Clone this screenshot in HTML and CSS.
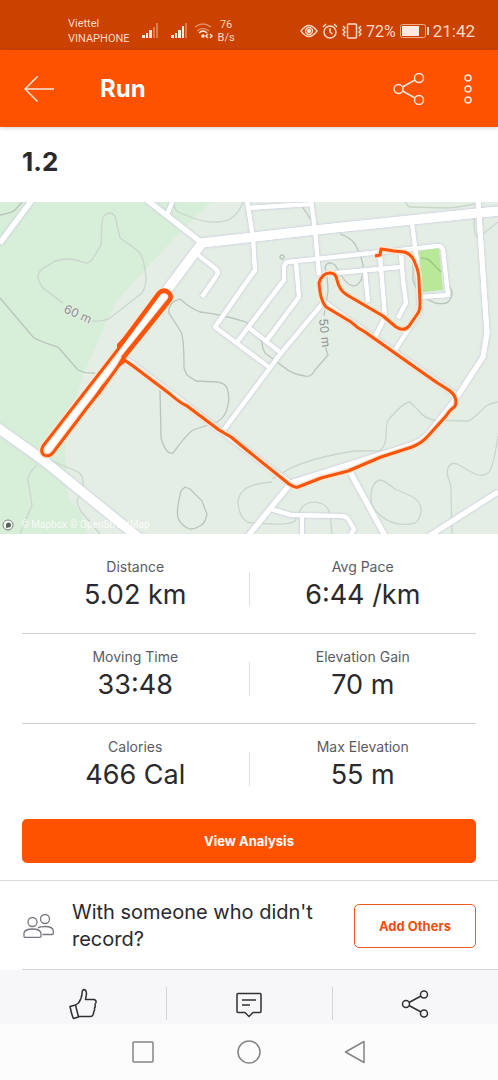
FILE: index.html
```html
<!DOCTYPE html>
<html lang="en">
<head>
    <meta charset="utf-8">
    <meta name="viewport" content="width=device-width, initial-scale=1">
    <title>Run</title>
    <link rel="stylesheet" href="styles.css">
</head>
<body>
    <div class="status-bar">
        <div class="carriers">Viettel<br>VINAPHONE</div>
        <svg class="signal" width="17" height="16" viewBox="0 0 17 16">
            <path d="M0 12h3v3H0zM4 10h2v5H4zM7 7h3v8H7z"/>
            <path class="dim" d="M11 4h2v11h-2zM14 0h2v15h-2z"/>
        </svg>
        <svg class="signal" width="17" height="16" viewBox="0 0 17 16">
            <path d="M0 12h3v3H0zM4 10h2v5H4zM7 7h3v8H7zM11 3h2v12h-2z"/>
            <path class="dim" d="M14 0h2v15h-2z"/>
        </svg>
        <svg class="wifi" width="19" height="16" viewBox="0 0 19 16">
            <path class="dim" d="M1 4Q9 -2 17 4M3 8Q9 3 15 8"/>
            <path d="M5 10Q9 6 13 10"/>
            <circle cx="9" cy="13" r="1"/>
            <path d="M14 11l-2 2 2 2M16 11l2 2-2 2"/>
        </svg>
        <div class="net-speed">76<br>B/s</div>
        <div class="status-right">
            <svg width="18" height="16" viewBox="0 0 18 16" fill="none" stroke="#ffd9c5" stroke-width="1.4">
                <path d="M1 8Q5 2.5 9 2.5T17 8Q13 13.5 9 13.5T1 8z"/>
                <circle cx="9" cy="8" r="3.5"/>
                <circle cx="9" cy="8" r="1.5" fill="#fff"/>
            </svg>
            <svg width="16" height="16" viewBox="0 0 16 16" fill="none" stroke="#ffd9c5" stroke-width="1.5">
                <circle cx="8" cy="9" r="6"/>
                <path d="M8 5v4l2.5 2M1 4l3-3M12 1l3 3"/>
            </svg>
            <svg width="20" height="16" viewBox="0 0 20 16" fill="none" stroke="#ffd9c5" stroke-width="1.5">
                <rect x="5.5" y="1" width="9" height="14" rx="1"/>
                <path d="M1 3l2 2-2 2 2 2-2 2 2 2M19 3l-2 2 2 2-2 2 2 2-2 2"/>
            </svg>
            <span class="percent">72%</span>
            <svg width="29" height="14" viewBox="0 0 29 14">
                <rect x=".5" y=".5" width="25" height="13" rx="2" fill="none" stroke="#f5a985"/>
                <rect x="2" y="2" width="17" height="10" fill="#ffe9df"/>
                <path d="M27 3h2v8h-2z" fill="#ffd9c5"/>
            </svg>
            <span class="clock">21:42</span>
        </div>
    </div>

    <header class="app-bar">
        <button class="icon-button" aria-label="Back">
            <svg width="30" height="26" viewBox="0 0 30 26" fill="none" stroke="#ffe6da" stroke-width="1.5">
                <path d="M30 13H1M13.5 0.5L1 13l12.5 12.5"/>
            </svg>
        </button>
        <h1>Run</h1>
        <button class="icon-button" aria-label="Share">
            <svg width="32" height="32" viewBox="0 0 32 32" fill="none" stroke="#ffe6da" stroke-width="1.5">
                <circle cx="5.5" cy="16" r="4.5"/>
                <circle cx="26" cy="5" r="4.5"/>
                <circle cx="26" cy="27" r="4.5"/>
                <path d="M9.5 14l12.500-7M9.5 18l12.500 7"/>
            </svg>
        </button>
        <button class="icon-button" aria-label="More options">
            <svg width="10" height="32" viewBox="0 0 10 32" fill="none" stroke="#ffe6da" stroke-width="1.5">
                <circle cx="5" cy="5" r="3"/>
                <circle cx="5" cy="16" r="3"/>
                <circle cx="5" cy="27" r="3"/>
            </svg>
        </button>
    </header>

    <main>
        <h2 class="activity-name">1.2</h2>

        <svg class="map" viewBox="0 202 498 332" role="img" aria-label="Route map">
            <defs>
                <g id="roads">
                    <g stroke-width="4">
                        <path d="M173 200L167 215"/>
                        <path d="M198 255L216 269Q219 272 217 275L202 297"/>
                        <path d="M247 200L253 238L255 270L215 327L270 368"/>
                        <path d="M248 208L311 204M311 200L315 230L319 275"/>
                        <path d="M323 303L281 353L223 431"/>
                        <path d="M281 353L248 327M237 342L284 280V268Q284 263 288 262L381 252L438 246Q442 246 443 250L448 295L421 297"/>
                        <path d="M296 263L299 297L267 340"/>
                        <path d="M336 273L401 267M365 271L368 302M380 255L385 317L375 337"/>
                        <path d="M401 253L403 280L406 303L398 318"/>
                        <path d="M412 223L417 262L420 312L395 350"/>
                        <path d="M271 509L291 515L340 516Q346 516 348 519L354 529L350 536M302 516V536"/>
                    </g>
                    <g stroke-width="5">
                        <path d="M32 200L0 243M147 200L202 243"/>
                        <path d="M478 200L487 333L483 357L455 400L430 432Q423 441 411 445L348 465L291 483L248 536"/>
                        <path d="M123 357L290 483M323 302L455 394"/>
                        <path d="M349 470L385 536M429 536L498 492"/>
                    </g>
                    <g stroke-width="9">
                        <path d="M-2 428L43 460L139 538"/>
                        <path d="M500 211L478 213L315 230L202 243L164 294L46 454"/>
                    </g>
                </g>
            </defs>
            <rect y="202" width="498" height="332" fill="#e4eee5"/>
            <path fill="#d7eed8" d="M0 202H211L180 232L147 268L115 303L100 337L83 375L67 430L65 451L68 498L80 511L88 534H0z"/>

            <g class="contours">
                <path d="M92 321Q102 322 110 318L142 293Q146 286 146 278Q145 265 142 257Q140 252 133 247L120 238L115 216Q110 210 104 216Q102 219 102 225L101 245L93 258Q90 263 86 263Q78 260 70 259Q62 259 55 261L42 269Q38 273 38 277Q39 283 43 288L63 303"/>
                <path d="M173 202Q175 210 178 212L193 218Q207 223 217 222Q227 222 233 217Q240 211 243 202"/>
                <path d="M37 465Q28 473 28 480L32 505L20 534M50 460L78 472Q84 476 83 485L77 501Q78 508 84 515L100 534"/>
                <path d="M272 482Q250 484 244 490Q238 495 238 503Q240 522 252 523L272 524Q289 525 295 521Q301 506 306 504Q312 501 320 503Q329 506 330 515L332 534"/>
                <path d="M272 479L291 468Q315 457 355 451L380 451Q386 445 386 435Q386 420 390 418Q404 402 410 402L418 410Q425 419 434 420L468 421Q472 420 485 407Q490 403 498 402"/>
                <path d="M381 480Q385 481 395 489L411 496Q421 501 421 509Q421 519 415 523Q408 525 398 524Q385 521 378 513Q371 508 371 498Q371 481 381 480z"/>
                <path d="M498 436Q493 470 488 473Q483 477 475 474L459 465Q453 461 449 466Q446 471 448 477Q452 486 451 495L452 534"/>
                <path d="M406 202Q407 207 411 207L448 208Q467 206 478 203M475 213Q472 234 478 238L498 222"/>
            </g>
            <g class="contours dark">
                <path d="M0 215Q12 213 15 210L22 202M0 298L33 337Q38 341 58 347L78 370Q86 374 95 373"/>
                <path d="M265 353Q262 348 262 342L246 322Q220 314 200 312Q190 308 180 299L173 302Q168 307 169 313L181 332Q184 338 184 368L187 375L196 381L217 382Q225 383 227 388Q230 397 228 405Q226 417 217 422L193 430Q187 434 173 453Q166 455 161 438L160 388"/>
                <path d="M185 487L190 489L202 501L207 514Q205 524 200 526Q195 529 190 529Q181 526 178 518Q176 510 181 491z"/>
                <path d="M340 234Q350 237 355 244Q361 255 363 265Q363 276 361 280Q358 286 353 286Q347 284 343 278L335 265Q328 260 325 267Q328 280 328 291L324 316M325 346L328 355L315 370Q311 378 305 376Q292 374 285 368L265 353"/>
                <path d="M300 203L311 220M413 263V280Q418 296 435 303Q446 305 449 301Q453 296 452 291L445 280"/>
                <circle cx="282" cy="257" r="2"/>
            </g>

            <use href="#roads" class="road-casing"/>
            <use href="#roads" class="road"/>
            <path d="M419 251L439 248L443 290L423 292z" fill="#b9e998"/>
            <path d="M421 258Q429 258 433 264L441 272" fill="none" stroke="#9ac985" stroke-width="1.5"/>

            <g class="map-label">
                <text transform="translate(63 312) rotate(24)">60 m</text>
                <text transform="translate(319 319) rotate(84)">50 m</text>
            </g>

            <g class="route-halo">
                <path id="route" d="M375 256L380 255L381 249Q388 250 394 251L404 252Q412 254 415 263Q419 272 419 280L420 303Q420 310 418 313L409 326Q404 332 396 327L383 316L347 295Q339 290 337 280Q336 273 330 273Q322 273 319 283Q320 300 326 307L351 322Q357 328 365 332L416 368L436 382L450 391Q456 396 456 402Q456 406 453 408Q450 410 446 416L428 436Q422 443 412 447L381 457L348 471L321 478L298 487Q295 488 289 484L248 451L231 437L219 430L187 406Q180 403 170 394L133 366L123 359"/>
                <path id="loop" d="M159 293L121 343L119 348L102 370L43 446Q40 452 44 455Q50 458 55 450L80 417L86 409L101 390L117 368L123 358L168 302Q173 297 169 293Q164 288 159 293z"/>
            </g>
            <use href="#route" class="route"/>
            <use href="#loop" class="route"/>
            <!-- the trace is thicker on the upper half and where it doubles back -->
            <path class="route overlap" d="M119 347L159 293Q164 288 169 293Q173 297 168 302L123 358"/>
            <path d="M117 351V344L122 339L127 338zM89 404L101 393L103 384L108 376zM118 368L127 361L123 355z" fill="#fb540d"/>

            <circle cx="8" cy="525" r="5" fill="#fff" stroke="#76827a"/>
            <path d="M6 528V525a2.5 2.5 0 1 1 2.5 2.5z" fill="#59645d"/>
            <text class="map-credit" x="21" y="528">© Mapbox © OpenStreetMap</text>
        </svg>

        <dl class="stats">
            <div class="stats-row">
                <div class="stat"><dt>Distance</dt><dd>5.02 km</dd></div>
                <div class="stat"><dt>Avg Pace</dt><dd>6:44 /km</dd></div>
            </div>
            <div class="stats-row">
                <div class="stat"><dt>Moving Time</dt><dd>33:48</dd></div>
                <div class="stat"><dt>Elevation Gain</dt><dd>70 m</dd></div>
            </div>
            <div class="stats-row">
                <div class="stat"><dt>Calories</dt><dd>466 Cal</dd></div>
                <div class="stat"><dt>Max Elevation</dt><dd>55 m</dd></div>
            </div>
        </dl>
        <div class="analysis">
            <button class="button primary">View Analysis</button>
        </div>

        <section class="others">
            <svg width="32" height="26" viewBox="0 0 32 26" fill="none" stroke="#77777f" stroke-width="1.3">
                <circle cx="10.5" cy="9" r="4.5"/>
                <circle cx="23" cy="6" r="4.500"/>
                <path d="M2 23.500V20Q3 16 10.500 16T19 20v3.500q0 .8-1 .8H3q-1 0-1-.8z"/>
                <path d="M16 15Q18 13.500 23 13.500Q31 13.500 31.300 18V20.500q0 1-1 1H20.500"/>
            </svg>
            <p>With someone who didn't record?</p>
            <button class="button outline">Add Others</button>
        </section>
    </main>

    <div class="actions">
        <button aria-label="Give kudos">
            <svg width="30" height="32" viewBox="0 0 30 32" fill="none" stroke="#303034" stroke-width="1.5" stroke-linejoin="round">
                <path d="M2 18.5l5.5-1.5 3 12-5 1.5Q4 28 2 18.5z"/>
                <path d="M7.5 17l3-2Q14 10 14 5.5Q14 2 16 1.5Q18.5 2 18.5 6L17.5 11.5H26q2.5.5 2 3l-1 2q.8 2-.5 3.5.5 2-.5 3l-1 4q-.5 1.5-3 1.5H10.5"/>
            </svg>
        </button>
        <button aria-label="Comments">
            <svg width="26" height="28" viewBox="0 0 26 28" fill="none" stroke="#303034" stroke-width="1.5" stroke-linejoin="round">
                <path d="M2 3.5h22q1 0 1 1v17q0 1-1 1h-7l-4 4-4-4H2q-1 0-1-1v-17q0-1 1-1z"/>
                <path d="M6 10h14M6 15h8"/>
            </svg>
        </button>
        <button aria-label="Share activity">
            <svg width="28" height="28" viewBox="0 0 28 28" fill="none" stroke="#303034" stroke-width="1.5">
                <circle cx="5" cy="14" r="3.5"/>
                <circle cx="23" cy="4.500" r="3.5"/>
                <circle cx="23" cy="23.500" r="3.5"/>
                <path d="M8 12.5l12-6.5M8 15.5l12 6.5"/>
            </svg>
        </button>
    </div>

    <nav class="system-nav">
        <button aria-label="Recent apps">
            <svg width="24" height="24" viewBox="0 0 24 24"><rect x="2" y="2" width="20" height="20" rx="1"/></svg>
        </button>
        <button aria-label="Home">
            <svg width="24" height="24" viewBox="0 0 24 24"><circle cx="12" cy="12" r="11"/></svg>
        </button>
        <button aria-label="Back">
            <svg width="24" height="24" viewBox="0 0 24 24"><path d="M21 1.5v21L2.5 12z"/></svg>
        </button>
    </nav>
</body>
</html>
```
FILE: styles.css
```css
* {
    box-sizing: border-box;
}

body {
    display: flex;
    flex-direction: column;
    min-height: 100vh;
    margin: 0;
    background: #fff;
    color: #29292e;
    font-family: Inter, "Liberation Sans", sans-serif;
}

h1, h2, p, dl, dd {
    margin: 0;
}

button {
    font-family: inherit;
    cursor: pointer;
}

svg {
    display: block;
    flex: none;
}

/* Phone status bar */
.status-bar {
    display: flex;
    align-items: center;
    height: 50px;
    padding: 12px 23px 0 68px;
    background: #cb4100;
    color: #ffd9c5;
    font-family: Roboto, sans-serif;
    font-size: 11px;
    line-height: 15px;
}

.signal {
    margin-left: 12px;
    fill: #ffe9df;
}

.signal .dim {
    opacity: .35;
}

.wifi {
    margin-left: 6px;
    fill: none;
    stroke: #ffe9df;
    stroke-width: 1.5;
}

.wifi .dim {
    opacity: .45;
}

.net-speed {
    margin-left: 5px;
    line-height: 13px;
    text-align: center;
}

.status-right {
    display: flex;
    align-items: center;
    gap: 4px;
    margin-left: auto;
    font-size: 16px;
}

.clock {
    font-size: 17px;
}

/* App bar */
.app-bar {
    display: flex;
    align-items: center;
    position: relative;
    height: 77px;
    padding: 0 25px 0 24px;
    background: #fe5200;
    box-shadow: 0 1px 4px rgba(0, 0, 0, .2);
    color: #fff;
}

.app-bar h1 {
    flex: 1;
    margin-left: 46px;
    font-size: 24px;
    line-height: 32px;
}

.icon-button {
    padding: 0;
    border: 0;
    background: none;
}

.icon-button + .icon-button {
    margin-left: 38px;
}

.activity-name {
    padding: 18px 22px 24px;
    font-size: 26px;
    line-height: 33px;
}

/* Map */
.map {
    width: 100%;
    height: auto;
}

.contours {
    fill: none;
    stroke: #c9d6cc;
    stroke-width: 1.3;
}

.contours.dark {
    stroke: #b9c5bc;
}

.road,
.road-casing {
    fill: none;
    stroke: #fff;
    stroke-linejoin: round;
}

.road-casing {
    filter: drop-shadow(0 0 1px #c9cbdc) drop-shadow(0 0 1px #d4d6e4);
}

.map-label {
    fill: #8d918f;
    stroke: #e4eee5;
    stroke-width: 2;
    paint-order: stroke;
    font-size: 12px;
}

.route,
.route-halo {
    fill: none;
    stroke: #fb540d;
    stroke-width: 3;
    stroke-linejoin: round;
}

.route.overlap {
    stroke-width: 4.5;
}

.route-halo {
    stroke: #ffe5cf;
    stroke-width: 6;
}

.map-credit {
    fill: #fff;
    fill-opacity: .8;
    font-family: Roboto, sans-serif;
    font-size: 10px;
}

/* Stats */
.stats {
    padding: 10px 22px 0;
}

.stats-row {
    display: flex;
    align-items: center;
    border-bottom: 1px solid #d0d0d8;
}

.stats-row:last-child {
    border-bottom: 0;
}

/* short rule between the two stats */
.stats-row::before {
    content: "";
    order: 1;
    width: 1px;
    height: 34px;
    background: #dfdfe5;
}

.stat {
    flex: 1;
    padding: 13px 0 20px;
    text-align: center;
}

.stat:last-child {
    order: 2;
}

.stat dt {
    color: #5b5b62;
    font-size: 14px;
    line-height: 20px;
}

.stat dd {
    font-size: 27px;
    line-height: 36px;
}

.analysis {
    padding: 6px 22px 17px;
}

.button {
    height: 44px;
    border: 2px solid #fe5200;
    border-radius: 5px;
    font-size: 13px;
    font-weight: 700;
}

.button.primary {
    width: 100%;
    background: #fe5200;
    color: #fff;
}

.button.outline {
    flex: none;
    width: 122px;
    border: 1px solid #ea5b22;
    background: #fff;
    color: #ee5012;
}

.others {
    display: flex;
    align-items: center;
    position: relative;
    padding: 18px 22px 17px;
    border-top: 1px solid #dcdce0;
}

.others::after {
    content: "";
    position: absolute;
    right: 0;
    bottom: 0;
    left: 22px;
    height: 1px;
    background: #d4d4da;
}

.others p {
    flex: 1;
    margin: 0 16px 0 18px;
    font-size: 20px;
    line-height: 27px;
}

/* Kudos, comment, share */
.actions {
    display: flex;
    height: 54px;
    padding-top: 7px;
    background: #f7f7fa;
}

.actions button {
    display: flex;
    flex: 1;
    align-items: center;
    justify-content: center;
    padding: 0 0 0;
    border: 0;
    background: none;
}

.actions button + button {
    background: linear-gradient(#d4d4da, #d4d4da) left 10px / 1px 33px no-repeat;
}

.actions svg {
    margin-top: 6px;
}

.system-nav {
    display: flex;
    flex: 1;
    align-items: center;
    justify-content: center;
    gap: 82px;
    min-height: 56px;
    background: #fcfcfc;
}

.system-nav button {
    padding: 0;
    border: 0;
    background: none;
}

.system-nav svg {
    fill: none;
    stroke: #858585;
    stroke-width: 1.5;
    stroke-linejoin: round;
}
```
